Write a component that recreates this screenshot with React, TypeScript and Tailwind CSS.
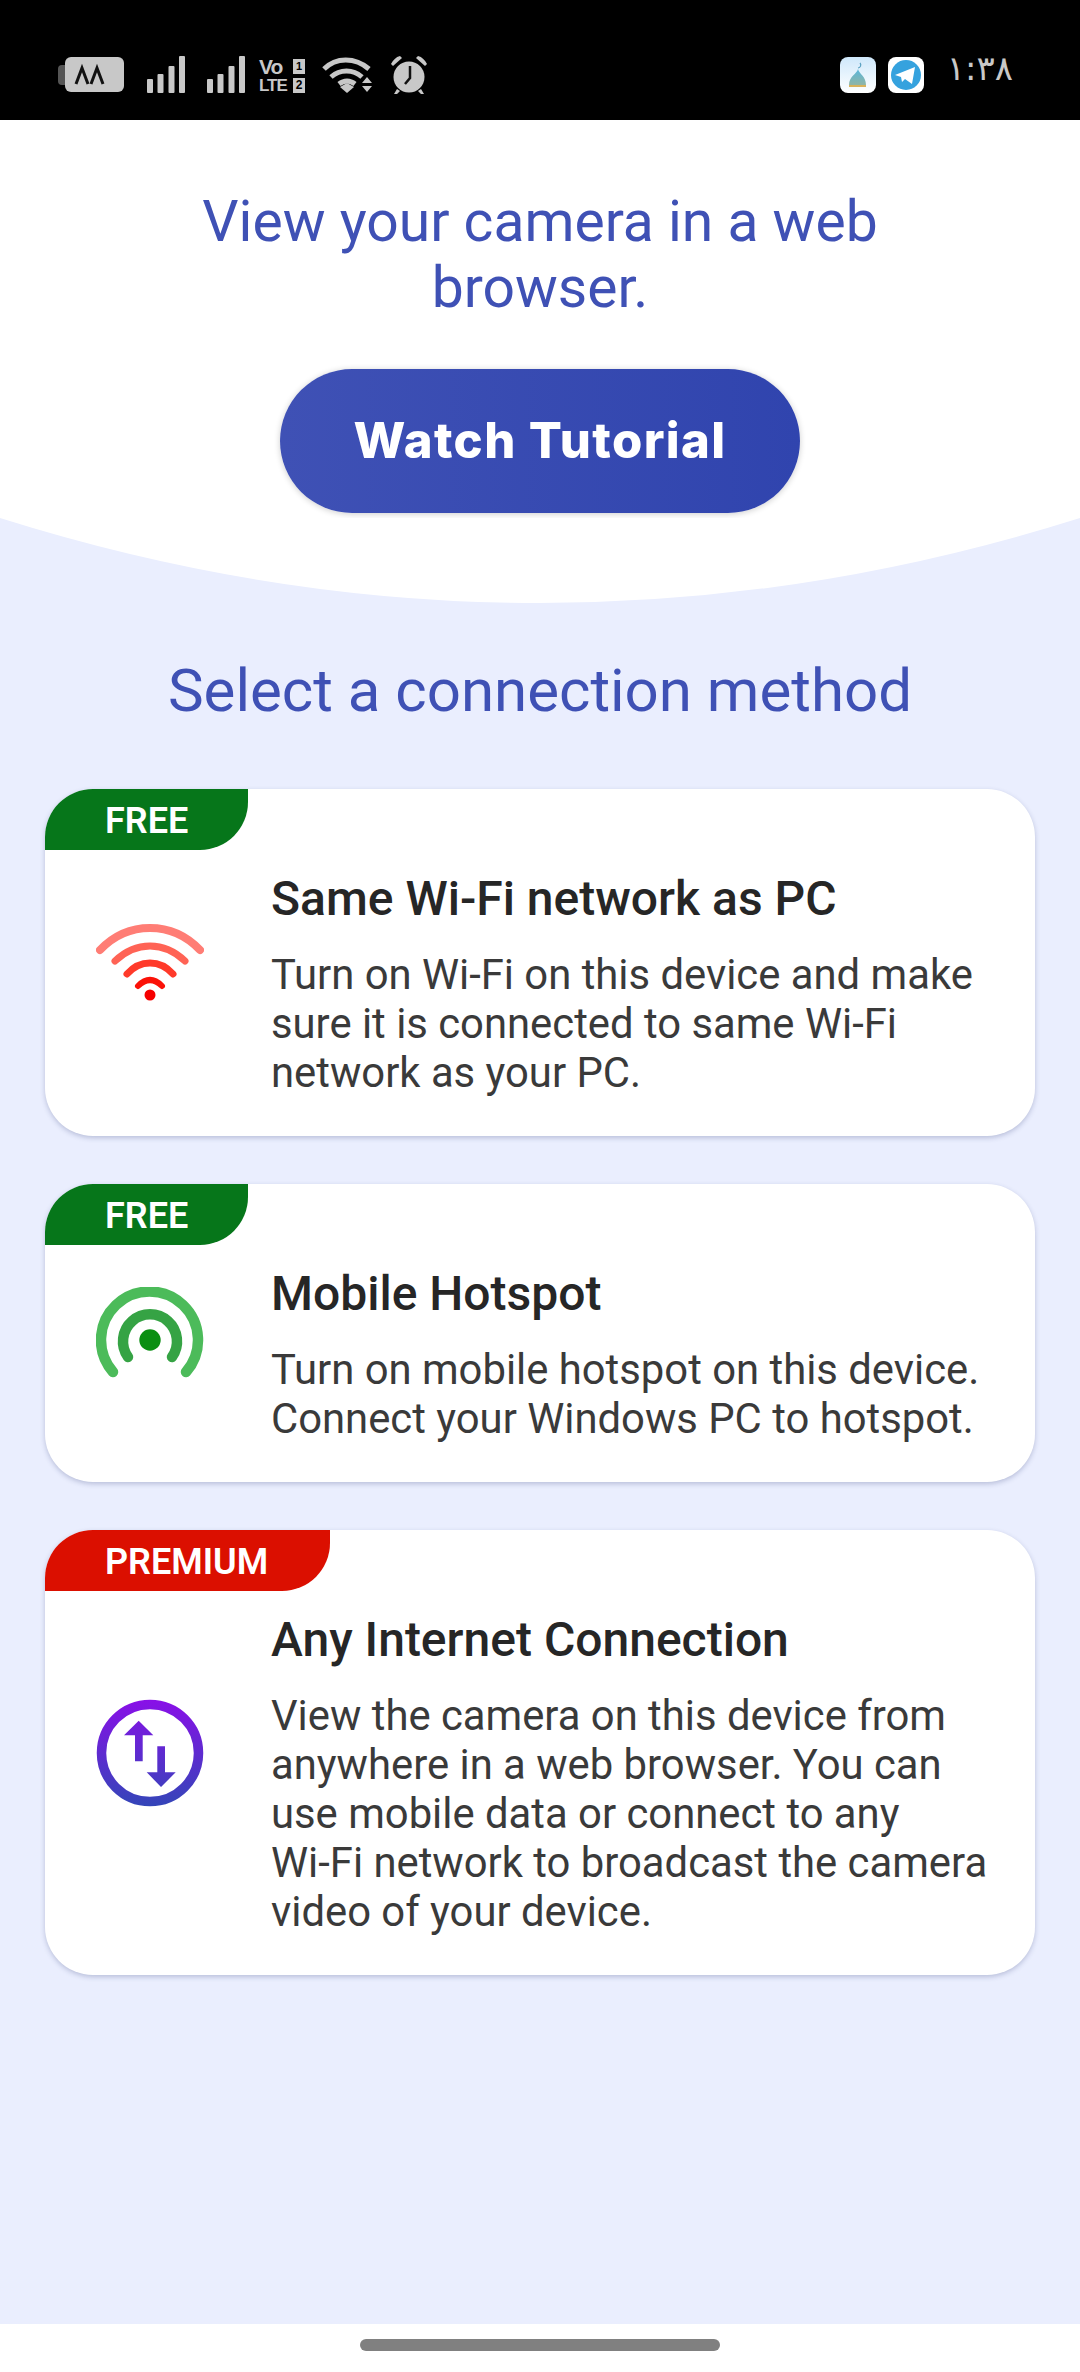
const Signal = () => (
  <svg width="38" height="38" viewBox="0 0 38 38" fill="#c8c8c8">
    <rect x="0" y="23" width="6" height="14" rx="1" />
    <rect x="10.5" y="18" width="6" height="19" rx="1" />
    <rect x="21.5" y="10" width="6" height="27" rx="1" />
    <rect x="32" y="0" width="6" height="37" rx="1" />
  </svg>
)

const StatusBar = () => (
  <div className="flex h-[120px] shrink-0 items-center justify-between bg-black pl-[58px] pr-[67px] pt-[30px]">
    <div className="flex items-center">
      {/* battery */}
      <svg width="66" height="36" viewBox="0 0 66 36">
        <path d="M4 8h3v20H4a4 4 0 0 1-4-4V12a4 4 0 0 1 4-4z" fill="#555" />
        <rect x="7" y="0" width="59" height="35" rx="6" fill="#c8c8c8" />
        <path d="M18 27l6-16 6 16M33 27l6-16 6 16" fill="none" stroke="#111" strokeWidth="3" />
      </svg>
      <div className="ml-[23px] flex gap-[22px]">
        <Signal />
        <Signal />
      </div>
      {/* VoLTE */}
      <div className="ml-[14px] flex h-[38px] w-[46px] flex-col font-['Liberation_Sans',sans-serif] font-bold leading-none text-[#c8c8c8]">
        <div className="flex h-[20px] items-center justify-between">
          <span className="text-[21px] tracking-[-1px]">Vo</span>
          <span className="flex h-[15px] w-[12px] items-center justify-center bg-[#c8c8c8] text-[11px] text-black">1</span>
        </div>
        <div className="flex h-[18px] items-center justify-between">
          <span className="text-[17px] tracking-[-1px]">LTE</span>
          <span className="flex h-[15px] w-[12px] items-center justify-center bg-[#c8c8c8] text-[12px] text-black">2</span>
        </div>
      </div>
      {/* wifi */}
      <svg className="ml-[17px]" width="50" height="38" viewBox="0 0 50 38" fill="none" stroke="#c8c8c8" strokeWidth="5">
        <path d="M2 13C14 1 33 1 47 13" />
        <path d="M9 21c9-8 22-8 31 0" />
        <path d="M17 28c5-4 11-4 16 0" />
        <path d="M18 31l7-4 7 4-7 6z" fill="#c8c8c8" stroke="none" />
        <path d="M40 27l5-6 5 6zM40 30l5 6 5-6z" fill="#c8c8c8" stroke="none" />
      </svg>
      {/* alarm */}
      <svg className="ml-[18px]" width="38" height="40" viewBox="0 0 38 40">
        <circle cx="19" cy="22" r="15.5" fill="#c8c8c8" />
        <path d="M1 9c2-4 5-7 9-8l2 2-9 8zM37 9c-2-4-5-7-9-8l-2 2 9 8z" fill="#c8c8c8" />
        <path d="M7 34l-3 5h3l3-3zM31 34l3 5h-3l-3-3z" fill="#c8c8c8" />
        <path d="M20 11v12l-5 6" fill="none" stroke="#111" strokeWidth="2.5" />
      </svg>
    </div>
    <div className="flex items-center">
      {/* app notification icon */}
      <svg width="36" height="36" viewBox="0 0 36 36">
        <defs>
          <linearGradient id="appSky" x1="0" y1="0" x2="0" y2="1">
            <stop offset="0" stopColor="#cfe8fb" />
            <stop offset="1" stopColor="#ffffff" />
          </linearGradient>
          <linearGradient id="appDome" x1="0" y1="0" x2="0" y2="1">
            <stop offset="0" stopColor="#58b6dc" />
            <stop offset="1" stopColor="#8fb5a6" />
          </linearGradient>
        </defs>
        <rect width="36" height="36" rx="8" fill="url(#appSky)" />
        <path d="M18 12c1 5 8 7 8 16H9c0-9 8-11 9-16z" fill="url(#appDome)" />
        <rect x="9" y="28" width="17" height="2" fill="#d8b25c" />
        <path d="M20 6a3 3 0 0 1-2 5" fill="none" stroke="#58a0c0" strokeWidth="1.2" />
      </svg>
      <svg className="ml-[12px]" width="36" height="36" viewBox="0 0 36 36">
        <rect width="36" height="36" rx="8" fill="#fff" />
        <circle cx="18" cy="18" r="15" fill="#35a2de" />
        <path d="M7 18l20-8-3 17-7-5-3 3-1-5z" fill="#fff" />
      </svg>
      <span dir="ltr" className="ml-[23px] -translate-y-[7px] font-['DejaVu_Sans',sans-serif] text-[34px] leading-none text-[#c8c8c8]">
        ۱:۳۸
      </span>
    </div>
  </div>
)

const Hero = () => (
  <div className="shrink-0">
    <div className="flex h-[398px] flex-col items-center bg-white pt-[69px]">
      <h1 className="w-[720px] text-center text-[57px] font-normal leading-[66px] text-[#3f51b5]">
        View your camera in a web browser.
      </h1>
      <button className="mt-[48px] flex h-[144px] w-[520px] items-center justify-center rounded-[72px] bg-gradient-to-r from-[#3f51b5] to-[#3044ae] font-['Inter',sans-serif] text-[49px] font-extrabold tracking-[1.4px] text-white shadow-[0_1px_6px_rgba(0,0,0,0.2)]">
        Watch Tutorial
      </button>
    </div>
    <svg className="block" width="1080" height="85" viewBox="0 0 1080 85">
      <path d="M0 0H1080Q540 170 0 0Z" fill="#fff" />
    </svg>
  </div>
)

const WifiIcon = () => (
  <svg width="108" height="80" viewBox="0 0 108 80" fill="none" strokeLinecap="round">
    <path d="M4 27C32 -2.3 76 -2.3 104 27" stroke="#ff7d75" strokeWidth="8" />
    <path d="M19 38C40 18 68 18 89 38" stroke="#ff6355" strokeWidth="7" />
    <path d="M31 51C44 36.3 64 36.3 77 51" stroke="#ff3a2a" strokeWidth="7" />
    <path d="M42 63C50 55 58 55 66 63" stroke="#fb1208" strokeWidth="6" />
    <circle cx="54" cy="72" r="5.5" fill="#f60000" />
  </svg>
)

const HotspotIcon = () => (
  <svg width="108" height="92" viewBox="0 0 108 92" fill="none" strokeLinecap="round">
    <path d="M17 85A48.5 48.5 0 1 1 90 85" stroke="#4cbb5a" strokeWidth="10.5" />
    <path d="M32 70A27 27 0 1 1 76 70" stroke="#35a344" strokeWidth="10.5" />
    <circle cx="54" cy="53" r="10.7" fill="#0a8f12" />
  </svg>
)

const InternetIcon = () => (
  <svg width="108" height="108" viewBox="-54 -54 108 108">
    <defs>
      <linearGradient id="netGrad" gradientUnits="userSpaceOnUse" x1="0" y1="-54" x2="0" y2="54">
        <stop offset="0" stopColor="#8a0fe8" />
        <stop offset="1" stopColor="#3346b8" />
      </linearGradient>
    </defs>
    <circle r="48.5" fill="none" stroke="url(#netGrad)" strokeWidth="9.5" />
    <path d="M-11.3-32.3L3.3-17.7H-7.3V8.3H-15V-17.7H-26Z" fill="url(#netGrad)" />
    <path d="M7.3-6.7H15V19.3H25.7L11 34-3.3 19.3H7.3Z" fill="url(#netGrad)" />
  </svg>
)

const methods = [
  {
    tag: "FREE",
    tagClass: "w-[203px] bg-[#06761a]",
    icon: <WifiIcon />,
    title: "Same Wi-Fi network as PC",
    lines: ["Turn on Wi-Fi on this device and make", "sure it is connected to same Wi-Fi", "network as your PC."],
  },
  {
    tag: "FREE",
    tagClass: "w-[203px] bg-[#06761a]",
    icon: <HotspotIcon />,
    title: "Mobile Hotspot",
    lines: ["Turn on mobile hotspot on this device.", "Connect your Windows PC to hotspot."],
  },
  {
    tag: "PREMIUM",
    tagClass: "w-[285px] bg-[#db0f00]",
    icon: <InternetIcon />,
    title: "Any Internet Connection",
    lines: [
      "View the camera on this device from",
      "anywhere in a web browser. You can",
      "use mobile data or connect to any",
      "Wi-Fi network to broadcast the camera",
      "video of your device.",
    ],
  },
]

export default function App() {
  return (
    <div className="flex h-[2372px] w-[1080px] flex-col overflow-hidden bg-[#eaeefe] font-['Roboto',sans-serif]">
      <StatusBar />
      <Hero />

      <main className="flex flex-1 flex-col px-[45px]">
        <h2 className="mt-[55px] text-center text-[60px] font-normal leading-[66px] text-[#3f51b5]">
          Select a connection method
        </h2>

        <div className="mt-[65px] flex flex-col gap-[48px]">
          {methods.map((m) => (
            <div
              key={m.title}
              className="relative flex items-center rounded-[48px] bg-white pl-[51px] shadow-[0_2px_5px_rgba(40,50,110,0.25)]"
            >
              <div
                className={`absolute left-0 top-0 flex h-[61px] items-center rounded-br-[48px] rounded-tl-[48px] pl-[60px] pt-[2px] text-[36px] font-semibold leading-none text-white ${m.tagClass}`}
              >
                {m.tag}
              </div>
              <div className="flex w-[108px] shrink-0 justify-center">{m.icon}</div>
              <div className="ml-[67px] pb-[39px] pt-[83px]">
                <div className="text-[48px] font-medium leading-[54px] text-[#262626]">{m.title}</div>
                <div className="mt-[24px] text-[41.8px] leading-[49px] text-[#3a3a3a]">
                  {m.lines.map((line) => (
                    <div key={line} className="whitespace-nowrap">
                      {line}
                    </div>
                  ))}
                </div>
              </div>
            </div>
          ))}
        </div>
      </main>

      <div className="flex h-[48px] shrink-0 justify-center bg-white pt-[15px]">
        <div className="h-[12px] w-[360px] rounded-full bg-[#808080]" />
      </div>
    </div>
  )
}
